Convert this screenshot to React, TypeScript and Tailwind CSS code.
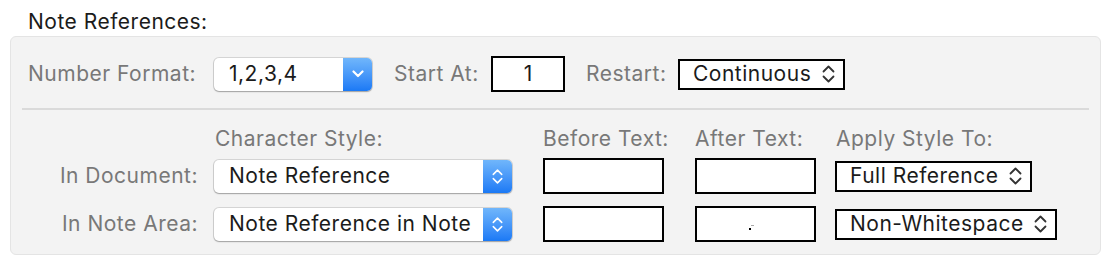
import React from 'react';

const font = { fontFamily: 'Inter, "Liberation Sans", sans-serif' };

function UpDown({ className = '' }: { className?: string }) {
  return (
    <svg viewBox="0 0 13 18" className={className} fill="none" stroke="currentColor" strokeWidth={1.8} strokeLinecap="round" strokeLinejoin="round">
      <path d="M1.5 6.5 L6.5 1.5 L11.5 6.5" />
      <path d="M1.5 11.5 L6.5 16.5 L11.5 11.5" />
    </svg>
  );
}

function ChevronDown() {
  return (
    <svg viewBox="0 0 12 8" className="w-[12px] h-[8px] text-white" fill="none" stroke="currentColor" strokeWidth={2.2} strokeLinecap="round" strokeLinejoin="round">
      <path d="M1.5 1.5 L6 6 L10.5 1.5" />
    </svg>
  );
}

// mac-style popup button with blue arrow segment
function PopUp({ value, width, single }: { value: string; width: string; single?: boolean }) {
  return (
    <div className={`flex h-[33px] ${width} rounded-[5px] bg-white shadow-[0_0_0_1px_rgba(0,0,0,0.12),0_1px_1.5px_rgba(0,0,0,0.25)]`}>
      <span className="flex-1 pl-[15px] flex items-center text-[21px] tracking-[0.5px] text-[#1b1b1b] whitespace-nowrap overflow-hidden">{value}</span>
      <div className="w-[29px] rounded-r-[5px] bg-linear-to-b from-[#70b6fb] to-[#1a79f5] flex items-center justify-center">
        {single ? <ChevronDown /> : <UpDown className="w-[11px] h-[17px] text-white" />}
      </div>
    </div>
  );
}

// plain boxed popup (black outline)
function BoxSelect({ value, width }: { value: string; width: string }) {
  return (
    <div className={`flex items-center h-[31px] ${width} border-2 border-black bg-white pl-[13px] pr-[8px]`}>
      <span className="flex-1 text-[21px] tracking-[0.5px] text-[#1b1b1b] whitespace-nowrap">{value}</span>
      <UpDown className="w-[13px] h-[18px] text-[#333]" />
    </div>
  );
}

function TextBox({ children }: { children?: React.ReactNode }) {
  return (
    <div className="relative h-[36px] w-[121px] border-2 border-black bg-white">
      {children}
    </div>
  );
}

export default function App() {
  const label = 'text-[21px] tracking-[0.5px] text-[#787878] whitespace-nowrap';

  return (
    <div className="w-[1112px] h-[268px] bg-white" style={font}>
      <div className="pl-[28px] pt-[8px] h-[36px] text-[21px] leading-[28px] tracking-[0.5px] text-[#1b1b1b]">
        Note References:
      </div>

      <div className="ml-[10px] w-[1091px] h-[219px] rounded-[6px] border border-[#e4e4e4] bg-[#f3f3f3]">
        {/* ── Number format row ── */}
        <div className="flex items-center h-[36px] mt-[19px] pl-[17px]">
          <div className={`w-[186px] ${label}`}>Number Format:</div>
          <PopUp value="1,2,3,4" width="w-[158px]" single />
          <div className={`ml-[22px] w-[97px] ${label}`}>Start At:</div>
          <div className="h-[36px] w-[74px] border-2 border-black bg-white flex items-center justify-center text-[21px] text-[#1b1b1b]">1</div>
          <div className={`ml-[21px] w-[92px] ${label}`}>Restart:</div>
          <BoxSelect value="Continuous" width="w-[167px]" />
        </div>

        <div className="mx-[11px] mt-[16px] h-[2px] bg-[#dadada]" />

        {/* ── Character style grid ── */}
        <div className="grid grid-cols-[186px_329px_152px_140px_1fr] pl-[17px] mt-[15px] gap-y-[12px] items-center">
          <div />
          <div className={`${label} leading-[28px] pl-[1px]`}>Character Style:</div>
          <div className={`${label} leading-[28px]`}>Before Text:</div>
          <div className={`${label} leading-[28px]`}>After Text:</div>
          <div className={`${label} leading-[28px] pl-[1px]`}>Apply Style To:</div>

          <div className={`${label} text-right pr-[16px] -mt-[7px]`}>In Document:</div>
          <div className="-mt-[7px] h-[36px] flex items-center"><PopUp value="Note Reference" width="w-[298px]" /></div>
          <div className="-mt-[7px]"><TextBox /></div>
          <div className="-mt-[7px]"><TextBox /></div>
          <div className="-mt-[7px]"><BoxSelect value="Full Reference" width="w-[197px]" /></div>

          <div className={`${label} text-right pr-[16px]`}>In Note Area:</div>
          <div className="h-[36px] flex items-center"><PopUp value="Note Reference in Note" width="w-[298px]" /></div>
          <div><TextBox /></div>
          <div>
            <TextBox>
              <span className="absolute left-[52px] top-[20px] w-[2px] h-[2px] bg-black" />
              <span className="absolute left-[54px] top-[17px] w-[3px] h-[1px] bg-[#aaa]" />
            </TextBox>
          </div>
          <div><BoxSelect value="Non-Whitespace" width="w-[222px]" /></div>
        </div>
      </div>
    </div>
  );
}
